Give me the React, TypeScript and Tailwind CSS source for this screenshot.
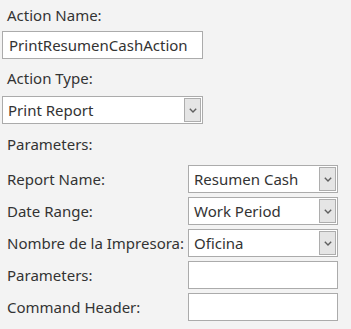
function Chevron() {
  return (
    <svg width="8" height="5" viewBox="0 0 8 5" className="block">
      <path d="M0.8 0.8 L4 4 L7.2 0.8" fill="none" stroke="#5f5f5f" strokeWidth="1.4" />
    </svg>
  );
}

function TextBox({ value = "", className = "" }: { value?: string; className?: string }) {
  return (
    <div className={`h-[28px] border border-[#ababab] bg-white flex items-center pl-[6px] ${className}`}>
      <span className="truncate">{value}</span>
    </div>
  );
}

function Combo({ value, className = "" }: { value: string; className?: string }) {
  return (
    <div className={`h-[28px] border border-[#ababab] bg-white flex items-stretch ${className}`}>
      <span className="flex-1 flex items-center pl-[5px] truncate">{value}</span>
      <div className="w-[17px] my-[1px] mr-[1px] border border-[#adadad] bg-[#e5e5e5] flex items-center justify-center">
        <Chevron />
      </div>
    </div>
  );
}

const rows: { label: string; kind: "combo" | "text"; value?: string }[] = [
  { label: "Report Name:", kind: "combo", value: "Resumen Cash" },
  { label: "Date Range:", kind: "combo", value: "Work Period" },
  { label: "Nombre de la Impresora:", kind: "combo", value: "Oficina" },
  { label: "Parameters:", kind: "text" },
  { label: "Command Header:", kind: "text" },
];

export default function App() {
  return (
    <div className="w-[351px] h-[329px] bg-[#f3f3f3] text-[#333] text-[15px] font-['Noto_Sans',sans-serif] pl-[2px] overflow-hidden">
      <div className="h-[31px] flex items-center pl-[5px]">Action Name:</div>
      <TextBox value="PrintResumenCashAction" className="w-[201px]" />
      <div className="h-[37px] flex items-center pl-[5px] pt-[2px]">Action Type:</div>
      <Combo value="Print Report" className="w-[201px]" />
      <div className="h-[41px] flex items-center pl-[5px]">Parameters:</div>
      <div className="flex flex-col gap-[4px]">
        {rows.map((r) => (
          <div key={r.label} className="flex items-center">
            <div className="w-[186px] pl-[5px]">{r.label}</div>
            {r.kind === "combo" ? (
              <Combo value={r.value!} className="w-[150px]" />
            ) : (
              <TextBox className="w-[150px]" />
            )}
          </div>
        ))}
      </div>
    </div>
  );
}
